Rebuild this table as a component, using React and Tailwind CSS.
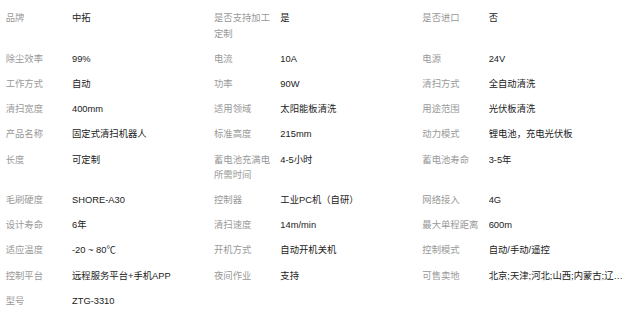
import React from 'react'

const specs = [
  ['品牌', '中拓'],
  ['是否支持加工定制', '是'],
  ['是否进口', '否'],
  ['除尘效率', '99%'],
  ['电流', '10A'],
  ['电源', '24V'],
  ['工作方式', '自动'],
  ['功率', '90W'],
  ['清扫方式', '全自动清洗'],
  ['清扫宽度', '400mm'],
  ['适用领域', '太阳能板清洗'],
  ['用途范围', '光伏板清洗'],
  ['产品名称', '固定式清扫机器人'],
  ['标准高度', '215mm'],
  ['动力模式', '锂电池，充电光伏板'],
  ['长度', '可定制'],
  ['蓄电池充满电所需时间', '4-5小时'],
  ['蓄电池寿命', '3-5年'],
  ['毛刷硬度', 'SHORE-A30'],
  ['控制器', '工业PC机（自研）'],
  ['网络接入', '4G'],
  ['设计寿命', '6年'],
  ['清扫速度', '14m/min'],
  ['最大单程距离', '600m'],
  ['适应温度', '-20 ~ 80℃'],
  ['开机方式', '自动开机关机'],
  ['控制模式', '自动/手动/遥控'],
  ['控制平台', '远程服务平台+手机APP'],
  ['夜间作业', '支持'],
  ['可售卖地', '北京;天津;河北;山西;内蒙古;辽宁;吉林;黑龙江;上海;江苏;浙江'],
  ['型号', 'ZTG-3310'],
]

const SpecCell = ({ label, value }) => (
  <div className="flex items-start py-[5px] pl-[5.7px] min-w-0">
    {/* label */}
    <div className="w-[61px] shrink-0 mr-[5.3px] text-[#999] break-all">{label}</div>
    {/* value */}
    <div className="flex-1 min-w-0 text-[#222] truncate">{value}</div>
  </div>
)

export default function App() {
  return (
    <div
      className="w-[625px] h-[326px] bg-white pt-[6.4px] text-[9.33px] leading-[15.2px] overflow-hidden"
      style={{ fontFamily: '"Liberation Sans", "Noto Sans CJK SC", sans-serif' }}
    >
      <div className="grid grid-cols-3">
        {specs.map(([label, value]) => (
          <SpecCell key={label} label={label} value={value} />
        ))}
      </div>
    </div>
  )
}
